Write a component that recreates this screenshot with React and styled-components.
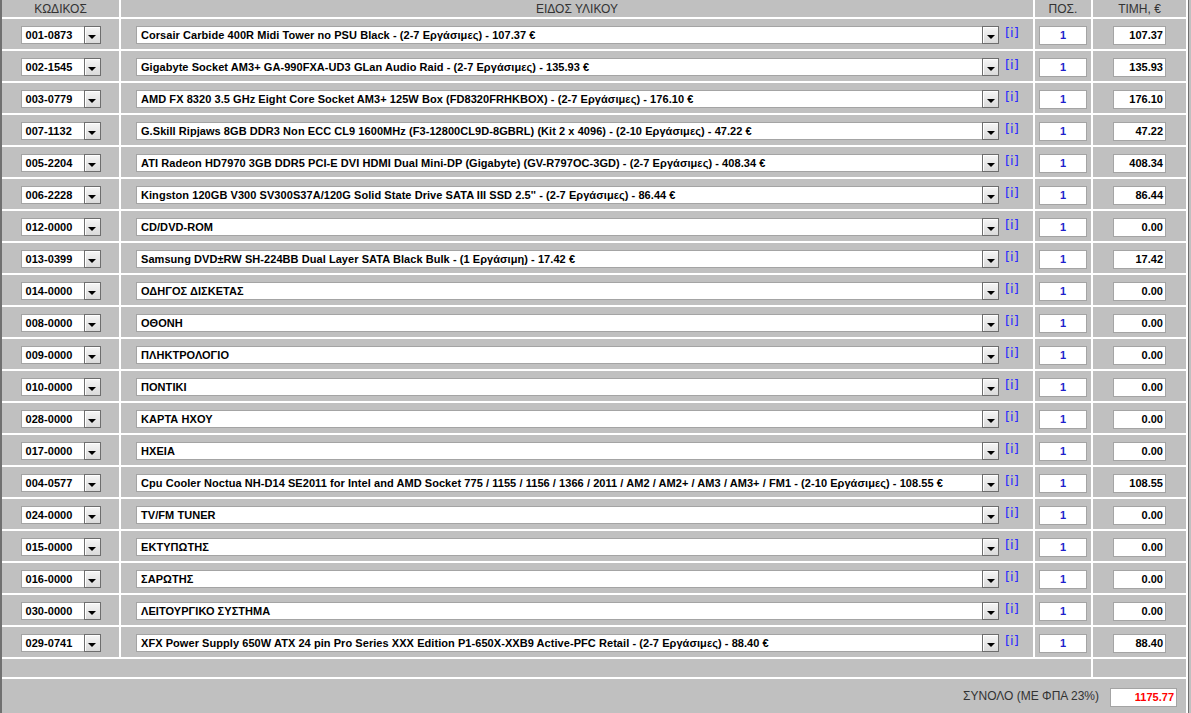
import React from "react";
import styled, { createGlobalStyle } from "styled-components";

const GlobalStyle = createGlobalStyle`
  html, body {
    margin: 0;
    padding: 0;
    background: #c0c0c0;
    font-family: "Liberation Sans", Arial, sans-serif;
  }
`;

const Table = styled.div`
  display: grid;
  grid-template-columns: 117px 912px 56px 93px;
  grid-template-rows: 17px repeat(20, 30px) 18px 34px;
  gap: 2px;
  width: max-content;
  background: #fff;
  border-left: 2px solid #707070;
  border-right: 1px solid #707070;
  padding-right: 2px;
`;

const Cell = styled.div`
  background: #c0c0c0;
  display: flex;
  align-items: center;
  justify-content: ${(p) => p.$justify || "center"};
  grid-column: ${(p) => p.$span ? `span ${p.$span}` : "auto"};
  padding: ${(p) => p.$pad || "0"};
  min-width: 0;
`;

const HeadCell = styled(Cell)`
  font-size: 12px;
  color: #333;
  padding-top: 1px;
`;

const SelectBox = styled.div`
  display: flex;
  align-items: stretch;
  width: ${(p) => p.$w}px;
  height: 18px;
  box-sizing: border-box;
  background: #fff;
  border: 1px solid #a4a4a4;
  margin-top: 2px;
`;

const SelectText = styled.span`
  flex: 1;
  font-size: 11px;
  font-weight: bold;
  letter-spacing: 0.06px;
  color: #000;
  line-height: 16px;
  padding-left: ${(p) => p.$pl || 4}px;
  white-space: nowrap;
  overflow: hidden;
`;

const DropButton = styled.span`
  width: 17px;
  margin: -1px -1px -1px 0;
  box-sizing: border-box;
  border: 1px solid #6e6e6e;
  background: linear-gradient(#f6f6f6, #dadada);
  box-shadow: inset 1px 1px 0 #fff;
  display: flex;
  align-items: center;
  justify-content: center;

  &::after {
    content: "";
    margin-top: 3px;
    border-left: 4px solid transparent;
    border-right: 4px solid transparent;
    border-top: 4px solid #000;
  }
`;

const InfoLink = styled.a`
  font-size: 13px;
  color: #2a2aff;
  text-decoration: none;
  margin-left: 6px;
  align-self: flex-start;
  margin-top: 6px;
  font-family: "DejaVu Sans", sans-serif;
`;

const Field = styled.div`
  width: ${(p) => p.$w}px;
  height: 19px;
  box-sizing: border-box;
  background: #fff;
  border: 1px solid #a4a4a4;
  font-size: 11px;
  font-weight: bold;
  line-height: 17px;
  color: ${(p) => p.$color || "#000"};
  text-align: ${(p) => p.$align || "right"};
  padding: 0 ${(p) => (p.$align === "center" ? 0 : 2)}px;
  margin-top: 2px;
`;

const TotalLabel = styled.span`
  font-size: 12px;
  color: #333;
  margin-right: 11px;
`;

const rows = [
  ["001-0873", "Corsair Carbide 400R Midi Tower no PSU Black - (2-7 Εργάσιμες) - 107.37 €", "107.37"],
  ["002-1545", "Gigabyte Socket AM3+ GA-990FXA-UD3 GLan Audio Raid - (2-7 Εργάσιμες) - 135.93 €", "135.93"],
  ["003-0779", "AMD FX 8320 3.5 GHz Eight Core Socket AM3+ 125W Box (FD8320FRHKBOX) - (2-7 Εργάσιμες) - 176.10 €", "176.10"],
  ["007-1132", "G.Skill Ripjaws 8GB DDR3 Non ECC CL9 1600MHz (F3-12800CL9D-8GBRL) (Kit 2 x 4096) - (2-10 Εργάσιμες) - 47.22 €", "47.22"],
  ["005-2204", "ATI Radeon HD7970 3GB DDR5 PCI-E DVI HDMI Dual Mini-DP (Gigabyte) (GV-R797OC-3GD) - (2-7 Εργάσιμες) - 408.34 €", "408.34"],
  ["006-2228", "Kingston 120GB V300 SV300S37A/120G Solid State Drive SATA III SSD 2.5'' - (2-7 Εργάσιμες) - 86.44 €", "86.44"],
  ["012-0000", "CD/DVD-ROM", "0.00"],
  ["013-0399", "Samsung DVD±RW SH-224BB Dual Layer SATA Black Bulk - (1 Εργάσιμη) - 17.42 €", "17.42"],
  ["014-0000", "ΟΔΗΓΟΣ ΔΙΣΚΕΤΑΣ", "0.00"],
  ["008-0000", "ΟΘΟΝΗ", "0.00"],
  ["009-0000", "ΠΛΗΚΤΡΟΛΟΓΙΟ", "0.00"],
  ["010-0000", "ΠΟΝΤΙΚΙ", "0.00"],
  ["028-0000", "ΚΑΡΤΑ ΗΧΟΥ", "0.00"],
  ["017-0000", "ΗΧΕΙΑ", "0.00"],
  ["004-0577", "Cpu Cooler Noctua NH-D14 SE2011 for Intel and AMD Socket 775 / 1155 / 1156 / 1366 / 2011 / AM2 / AM2+ / AM3 / AM3+ / FM1 - (2-10 Εργάσιμες) - 108.55 €", "108.55"],
  ["024-0000", "TV/FM TUNER", "0.00"],
  ["015-0000", "ΕΚΤΥΠΩΤΗΣ", "0.00"],
  ["016-0000", "ΣΑΡΩΤΗΣ", "0.00"],
  ["030-0000", "ΛΕΙΤΟΥΡΓΙΚΟ ΣΥΣΤΗΜΑ", "0.00"],
  ["029-0741", "XFX Power Supply 650W ATX 24 pin Pro Series XXX Edition P1-650X-XXB9 Active-PFC Retail - (2-7 Εργάσιμες) - 88.40 €", "88.40"],
];

const App = () => {
  return (
    <>
      <GlobalStyle />
      <Table>
        <HeadCell>ΚΩΔΙΚΟΣ</HeadCell>
        <HeadCell>ΕΙΔΟΣ ΥΛΙΚΟΥ</HeadCell>
        <HeadCell>ΠΟΣ.</HeadCell>
        <HeadCell>ΤΙΜΗ, €</HeadCell>

        {rows.map(([code, name, price]) => (
          <React.Fragment key={code}>
            <Cell>
              <SelectBox $w={80}>
                <SelectText $pl={4}>{code}</SelectText>
                <DropButton />
              </SelectBox>
            </Cell>
            <Cell $justify="flex-start" $pad="0 0 0 15px">
              <SelectBox $w={863}>
                <SelectText $pl={4}>{name}</SelectText>
                <DropButton />
              </SelectBox>
              <InfoLink href="#">[i]</InfoLink>
            </Cell>
            <Cell>
              <Field $w={48} $align="center" $color="#1e1ecc">1</Field>
            </Cell>
            <Cell>
              <Field $w={53}>{price}</Field>
            </Cell>
          </React.Fragment>
        ))}

        <Cell $span={3} />
        <Cell />

        <Cell $span={4} $justify="flex-end" $pad="0 9px 0 0">
          <TotalLabel>ΣΥΝΟΛΟ (ΜΕ ΦΠΑ 23%)</TotalLabel>
          <Field $w={67} $color="#ff0000">1175.77</Field>
        </Cell>
      </Table>
    </>
  );
};

export default App;
